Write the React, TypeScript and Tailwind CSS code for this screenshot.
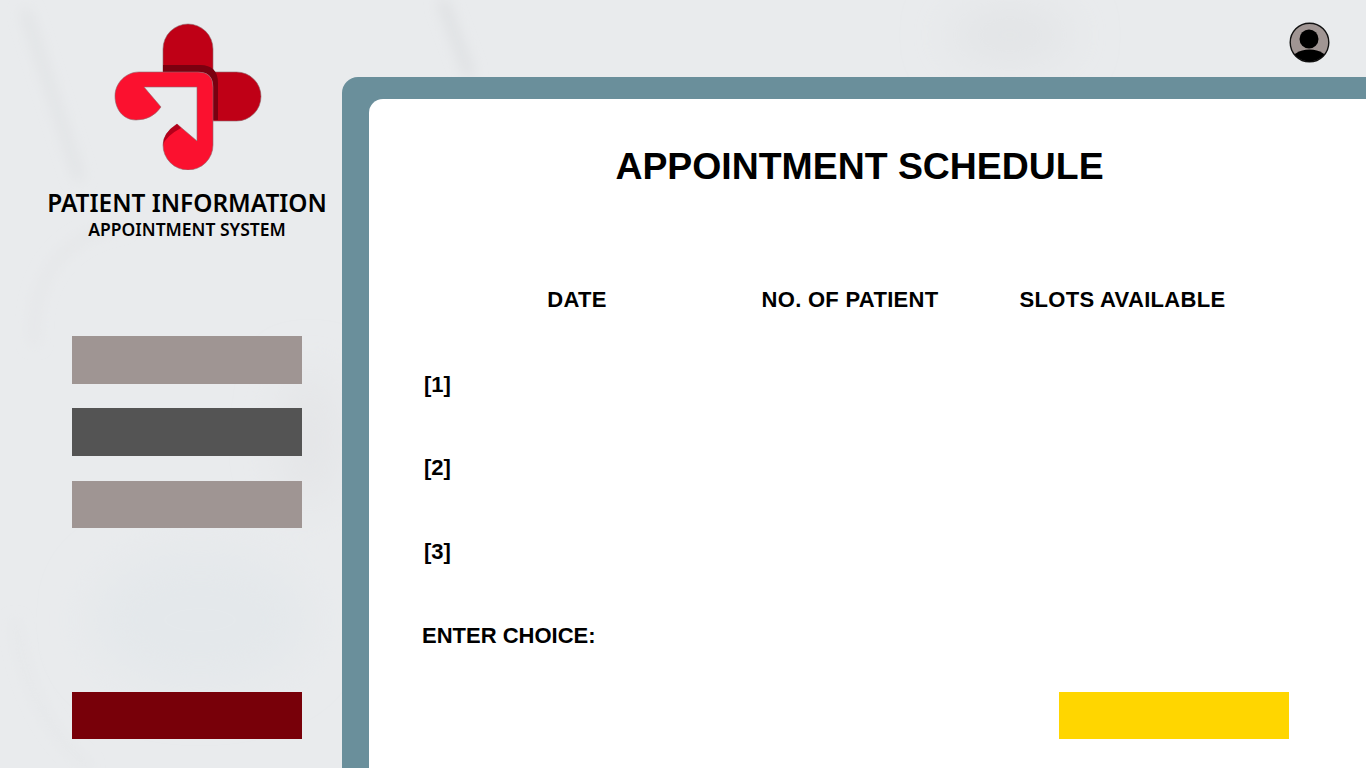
const sideFont = { fontFamily: '"Noto Sans", sans-serif' };
const mainFont = { fontFamily: '"Liberation Sans", Arial, sans-serif' };

const Logo = () => (
  <svg width="148" height="147" viewBox="0 0 148 147" className="shrink-0">
    <path
      d="M49 49V26a25 25 0 0 1 50 0V49ZM99 49H122.500a24.500 24.500 0 0 1 0 49H99Z"
      fill="#bf0016"
      stroke="#8d6a6e"
      strokeWidth="0.6"
    />
    <path d="M49 42H86Q104 42 104 60V97H99V64Q99 49 84 49H49Z" fill="#7a0010" />
    <path
      d="M25 49H84Q99 49 99 64V122a25 25 0 0 1-50 0Q49 110 63 101L83 118V64H30L47 84Q38 97 22 97C9 97 1 86 1 73C1 60 12 49 25 49Z"
      fill="#fb112f"
      stroke="#8d6a6e"
      strokeWidth="0.6"
    />
    <path d="M63 101Q49 110 49 122Q52 113 67 105Z" fill="#b3001a" />
  </svg>
);

const Avatar = () => (
  <svg width="41" height="41" viewBox="0 0 41 41" className="absolute right-[36px] top-[22px]">
    <defs>
      <clipPath id="avatar-clip">
        <circle cx="20.500" cy="20.500" r="19" />
      </clipPath>
    </defs>
    <circle cx="20.500" cy="20.500" r="19.300" fill="#a09593" stroke="#111" strokeWidth="1.400" />
    <circle cx="20" cy="17" r="9.500" fill="#000" />
    <ellipse cx="20.500" cy="40" rx="19" ry="12.500" fill="#000" clipPath="url(#avatar-clip)" />
  </svg>
);

// faint blurred stethoscope photo behind the page
const Backdrop = () => (
  <svg width="1366" height="768" viewBox="0 0 1366 768" className="absolute left-0 top-0">
    <defs>
      <filter id="soft">
        <feGaussianBlur stdDeviation="7" />
      </filter>
      <filter id="softer">
        <feGaussianBlur stdDeviation="24" />
      </filter>
    </defs>
    <rect width="1366" height="768" fill="#e9ebed" />
    <g filter="url(#softer)">
      <ellipse cx="1010" cy="35" rx="60" ry="22" fill="#e0e2e4" />
      <ellipse cx="200" cy="620" rx="110" ry="70" fill="#e4e8eb" />
      <ellipse cx="310" cy="440" rx="25" ry="70" fill="#e3e4e6" />
    </g>
    <g filter="url(#soft)" fill="none">
      <path d="M25 10L80 180" strokeWidth="8" stroke="#dfe1e3" />
      <path d="M442 0L470 76" strokeWidth="9" stroke="#dcdee0" />
      <path d="M35 345C30 280 60 235 125 225" strokeWidth="7" stroke="#e4e5e7" />
      <path d="M15 620C25 690 50 735 90 768" strokeWidth="5" stroke="#e3e5e7" />
    </g>
  </svg>
);

const SideBar = ({ color, className = "h-[48px]" }: { color: string; className?: string }) => (
  <div className={`w-[230px] ${className} ${color}`} />
);

const rows = ["[1]", "[2]", "[3]"];

export default function App() {
  return (
    <div className="relative flex h-[768px] w-[1366px] overflow-hidden text-black">
      <Backdrop />
      <Avatar />

      <aside
        className="relative flex w-[342px] shrink-0 flex-col items-center pb-[29px] pl-[32px] pt-[23px]"
        style={sideFont}
      >
        <div className="pl-[2px]">
          <Logo />
        </div>
        <h1 className="mt-[17px] whitespace-nowrap text-[24.400px] font-semibold leading-[32px]">PATIENT INFORMATION</h1>
        <p className="mt-[-1px] whitespace-nowrap text-[17.500px] font-semibold leading-[22px]">APPOINTMENT SYSTEM</p>
        <div className="mt-[96px] flex flex-col gap-[24px]">
          <SideBar color="bg-[#9f9593]" />
          <SideBar color="bg-[#545454]" />
          <SideBar color="bg-[#9f9593] mt-[1px]" className="h-[47px]" />
        </div>
        <div className="mt-auto">
          <SideBar color="bg-[#780009]" className="h-[47px]" />
        </div>
      </aside>

      <main className="relative mt-[77px] flex-1 rounded-tl-[16px] bg-[#6a8f9b] pl-[27px] pt-[22px]" style={mainFont}>
        <div className="h-full rounded-tl-[14px] bg-white pl-[53px] pr-[77px]">
          <h2 className="pt-[42px] text-center text-[37.400px] font-bold leading-[50px]">
            <span className="relative left-[4px]">APPOINTMENT SCHEDULE</span>
          </h2>
          <div className="mt-[94px] grid grid-cols-[274px_272px_273px] pl-[18px] text-center text-[22px] font-bold leading-[30px] tracking-[0.3px]">
            <span>DATE</span>
            <span>NO. OF PATIENT</span>
            <span>SLOTS AVAILABLE</span>
          </div>
          <div className="mt-[54.800px] flex flex-col gap-[53.600px] pl-[2px] text-[22px] font-bold leading-[30px]">
            {rows.map((row) => (
              <span key={row}>{row}</span>
            ))}
            <span className="ml-[-2px]">ENTER CHOICE:</span>
          </div>
          <div className="mt-[41.400px] flex justify-end">
            <div className="h-[47px] w-[230px] bg-[#ffd600]" />
          </div>
        </div>
      </main>
    </div>
  );
}
